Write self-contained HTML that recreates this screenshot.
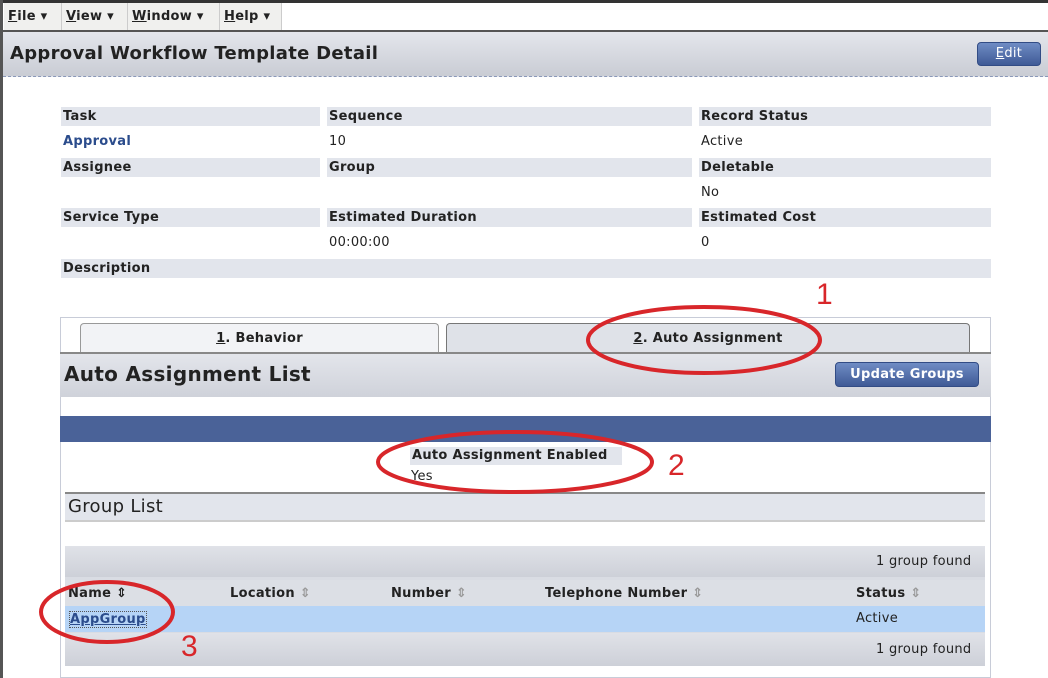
<!DOCTYPE html>
<html><head><meta charset="utf-8"><style>
*{margin:0;padding:0;box-sizing:border-box}
body{width:1048px;height:678px;background:#fff;position:relative;overflow:hidden;font-family:"DejaVu Sans","Liberation Sans",sans-serif;font-size:13px;color:#222;letter-spacing:0.3px}
.a{position:absolute}
.b{font-weight:bold}
.lab{position:absolute;height:19px;background:#e2e5ec;font-weight:bold;padding:2px 2px;font-size:13px;color:#222}
.val{position:absolute;font-size:13px}
.menu{position:absolute;top:3px;height:27px;background:#f0f0ee;border-right:1px solid #ccc;font-weight:bold;font-size:13px;padding:6px 4px;color:#222}
.btn{position:absolute;background:linear-gradient(#6f8cc4,#3f5a96);color:#fff;border-radius:4px;font-size:13px;text-align:center;border:1px solid #324c85}
.th{position:absolute;top:586px;font-weight:bold;font-size:13px}
</style></head><body>
<div class="a" style="left:0;top:0;width:1048px;height:3px;background:#333"></div>
<div class="a" style="left:0;top:0;width:3px;height:678px;background:#555"></div>
<div class="menu" style="left:4px;width:58px"><u>F</u>ile ▾</div>
<div class="menu" style="left:62px;width:66px"><u>V</u>iew ▾</div>
<div class="menu" style="left:128px;width:92px"><u>W</u>indow ▾</div>
<div class="menu" style="left:220px;width:62px"><u>H</u>elp ▾</div>
<div class="a" style="left:3px;top:30px;width:1045px;height:2px;background:#555"></div>
<div class="a" style="left:3px;top:32px;width:1045px;height:45px;background:linear-gradient(#e4e6ec,#c9ccd4);border-bottom:1px dashed #8a98b8"></div>
<div class="a b" style="left:10px;top:43px;font-size:18px;color:#222">Approval Workflow Template Detail</div>
<div class="btn" style="left:977px;top:42px;width:64px;height:24px;padding-top:3px"><u>E</u>dit</div>

<div class="lab" style="left:61px;top:107px;width:259px">Task</div>
<div class="lab" style="left:327px;top:107px;width:365px">Sequence</div>
<div class="lab" style="left:699px;top:107px;width:292px">Record Status</div>
<div class="val b" style="left:63px;top:134px;color:#2b4c8c">Approval</div>
<div class="val" style="left:329px;top:134px">10</div>
<div class="val" style="left:701px;top:134px">Active</div>
<div class="lab" style="left:61px;top:158px;width:259px">Assignee</div>
<div class="lab" style="left:327px;top:158px;width:365px">Group</div>
<div class="lab" style="left:699px;top:158px;width:292px">Deletable</div>
<div class="val" style="left:701px;top:185px">No</div>
<div class="lab" style="left:61px;top:208px;width:259px">Service Type</div>
<div class="lab" style="left:327px;top:208px;width:365px">Estimated Duration</div>
<div class="lab" style="left:699px;top:208px;width:292px">Estimated Cost</div>
<div class="val" style="left:329px;top:235px">00:00:00</div>
<div class="val" style="left:701px;top:235px">0</div>
<div class="lab" style="left:61px;top:259px;width:930px">Description</div>

<div class="a" style="left:60px;top:317px;width:931px;height:361px;border:1px solid #c8ccd8"></div>
<div class="a b" style="left:80px;top:323px;width:359px;height:30px;background:#f2f3f6;border:1px solid #999;border-bottom:none;border-radius:4px 4px 0 0;text-align:center;padding-top:7px"><u>1</u>. Behavior</div>
<div class="a b" style="left:446px;top:323px;width:524px;height:30px;background:#dfe2e8;border:1px solid #777;border-bottom:none;border-radius:4px 4px 0 0;text-align:center;padding-top:7px"><u>2</u>. Auto Assignment</div>
<div class="a" style="left:60px;top:352px;width:931px;height:45px;background:linear-gradient(#e3e5eb,#cfd2da);border-top:2px solid #888"></div>
<div class="a b" style="left:64px;top:362px;font-size:20px;color:#222">Auto Assignment List</div>
<div class="btn b" style="left:835px;top:362px;width:144px;height:25px;padding-top:4px">Update Groups</div>
<div class="a" style="left:60px;top:416px;width:931px;height:26px;background:#4a6298"></div>
<div class="lab" style="left:410px;top:447px;width:212px;height:18px;padding:1px 2px">Auto Assignment Enabled</div>
<div class="val" style="left:411px;top:469px">Yes</div>
<div class="a" style="left:65px;top:492px;width:920px;height:30px;background:#e2e5ec;border-top:2px solid #888;border-bottom:2px solid #ccc"></div>
<div class="a" style="left:68px;top:496px;font-size:18px">Group List</div>

<div class="a" style="left:65px;top:546px;width:920px;height:120px;background:#d9dce3"></div>
<div class="a" style="left:65px;top:546px;width:920px;height:31px;background:linear-gradient(#e0e2e8,#cdd0d8)"></div>
<div class="val" style="left:876px;top:554px">1 group found</div>
<div class="a" style="left:65px;top:580px;width:920px;height:26px;background:#dcdfe5"></div>
<div class="th" style="left:68px">Name ⇕</div>
<div class="th" style="left:230px">Location <span style="color:#999">⇕</span></div>
<div class="th" style="left:391px">Number <span style="color:#999">⇕</span></div>
<div class="th" style="left:545px">Telephone Number <span style="color:#999">⇕</span></div>
<div class="th" style="left:856px">Status <span style="color:#999">⇕</span></div>
<div class="a" style="left:65px;top:606px;width:920px;height:26px;background:#b6d4f6"></div>
<div class="val b" style="left:69px;top:611px;color:#2b4c8c;text-decoration:underline;border:1px dotted #555">AppGroup</div>
<div class="val" style="left:856px;top:611px">Active</div>
<div class="a" style="left:65px;top:633px;width:920px;height:33px;background:linear-gradient(#e0e2e8,#cdd0d8)"></div>
<div class="val" style="left:876px;top:642px">1 group found</div>

<svg class="a" style="left:0;top:0" width="1048" height="678">
<g fill="none" stroke="#d8262a" stroke-width="4">
<ellipse cx="704" cy="340" rx="116" ry="33"/>
<ellipse cx="515" cy="462" rx="137" ry="30"/>
<ellipse cx="107" cy="612" rx="66" ry="30"/>
</g>
<g fill="#d8262a" font-family="Liberation Sans,sans-serif" font-size="30">
<text x="816" y="304">1</text>
<text x="668" y="475">2</text>
<text x="181" y="656">3</text>
</g>
</svg>
</body></html>
